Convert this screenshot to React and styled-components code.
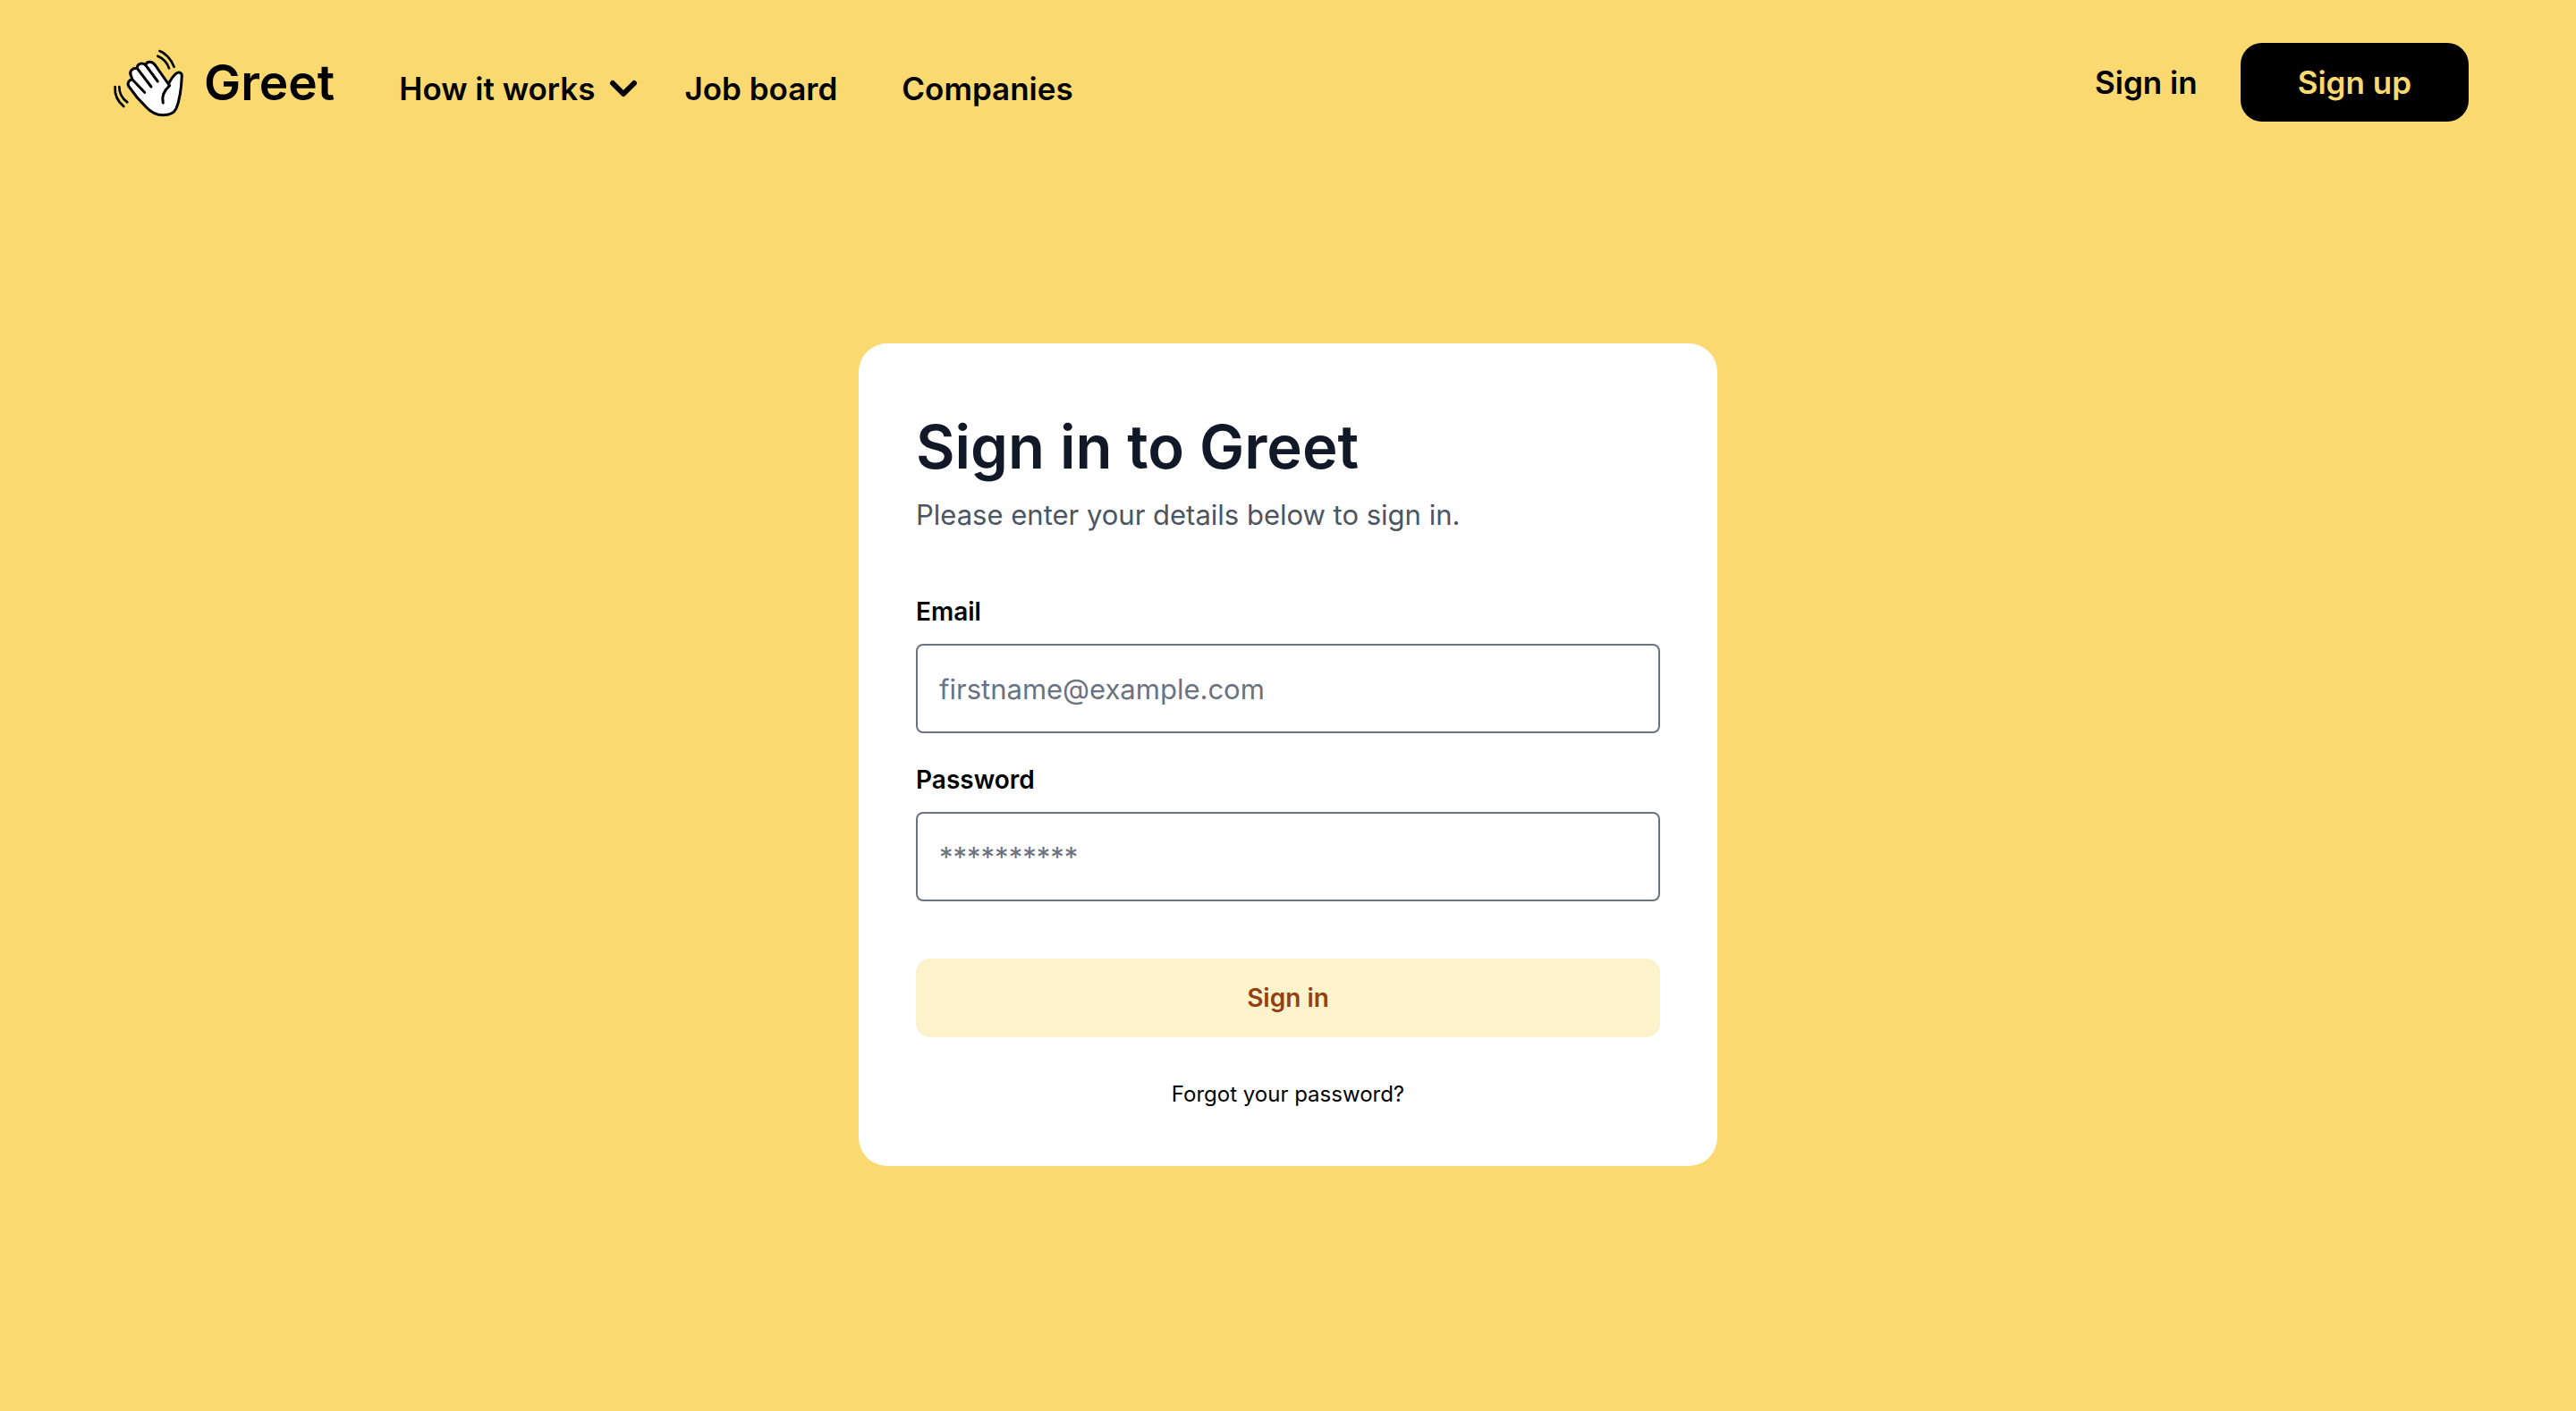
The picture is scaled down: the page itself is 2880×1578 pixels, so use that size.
import React from "react";
import styled, { createGlobalStyle } from "styled-components";

const yellow = "#fad970";

const GlobalStyle = createGlobalStyle`
  *, *::before, *::after { box-sizing: border-box; }
  body {
    margin: 0;
    background: ${yellow};
    color: #000;
    font-family: Inter, "Liberation Sans", sans-serif;
    -webkit-font-smoothing: antialiased;
  }
  button, input { font: inherit; }
`;

const Page = styled.div`
  min-height: 100vh;
  background: ${yellow};
`;

const Header = styled.header`
  display: flex;
  align-items: center;
  padding: 48px 120px;
`;

const Logo = styled.a`
  display: flex;
  align-items: center;
  gap: 16px;
  color: inherit;
  font-size: 55px;
  font-weight: 600;
  line-height: 88px;
  text-decoration: none;
`;

const Hand = styled.svg`
  width: 92px;
  height: 88px;
`;

const Nav = styled.nav`
  display: flex;
  align-items: center;
  gap: 72px;
  margin-left: 72px;
  padding-top: 14px;
`;

const navText = `
  font-size: 35px;
  font-weight: 600;
  line-height: 48px;
`;

const NavLink = styled.a`
  ${navText}
  color: inherit;
  text-decoration: none;
`;

const NavMenu = styled.button`
  ${navText}
  display: flex;
  align-items: center;
  gap: 16px;
  margin-right: -20px;
  padding: 0;
  border: 0;
  background: none;
  color: inherit;
`;

const Chevron = styled.svg`
  width: 32px;
  height: 20px;
`;

const Actions = styled.div`
  display: flex;
  align-items: center;
  gap: 48px;
  margin-left: auto;
`;

const SignUp = styled.a`
  ${navText}
  padding: 20px 64px;
  border-radius: 24px;
  background: #000;
  color: ${yellow};
  text-decoration: none;
`;

const Main = styled.main`
  display: flex;
  justify-content: center;
  padding: 200px 48px 48px;
`;

const Card = styled.section`
  width: 100%;
  max-width: 960px;
  padding: 72px 64px 64px;
  border-radius: 32px;
  background: #fff;
`;

const Title = styled.h1`
  margin: 0 0 8px;
  color: #111827;
  font-size: 67px;
  font-weight: 600;
  line-height: 88px;
`;

const Subtitle = styled.p`
  margin: 0;
  color: #4b5563;
  font-size: 31px;
  line-height: 48px;
`;

const Form = styled.form`
  display: flex;
  flex-direction: column;
  gap: 32px;
  margin-top: 64px;
`;

const Field = styled.div`
  display: flex;
  flex-direction: column;
  gap: 16px;
`;

const Label = styled.label`
  font-size: 28px;
  font-weight: 600;
  line-height: 40px;
`;

const Input = styled.input`
  width: 100%;
  height: 100px;
  padding: 0 24px;
  border: 2px solid #6b7280;
  border-radius: 8px;
  background: #fff;
  font-size: 31px;
  &::placeholder { color: #6b7280; opacity: 1; }
`;

const Submit = styled.button`
  margin-top: 32px;
  padding: 24px;
  border: 0;
  border-radius: 16px;
  background: #fcf2cc;
  color: #92400e;
  font-size: 28px;
  font-weight: 600;
  line-height: 40px;
`;

const Forgot = styled.a`
  align-self: center;
  margin-top: 16px;
  color: #000;
  font-size: 24px;
  line-height: 32px;
  text-decoration: none;
`;

function WavingHand() {
  return (
    <Hand viewBox="0 -6 276 264" fill="none" stroke="#000" strokeWidth="9" strokeLinecap="round" strokeLinejoin="round" aria-hidden="true">
      <path
        fill="#fff"
        d="M205 132 L160 68 C150 54 133 54 128 68 C117 58 99 64 100 79 C86 77 72 88 79 103 L84 117 C74 116 65 128 72 140 C88 164 108 188 130 209 C148 228 166 236 186 236 C207 236 224 229 231 214 C242 188 248 154 250 104 C250 92 238 91 230 97 C219 106 212 118 205 132 Z"
      />
      <path d="M84 117 L125 160 M100 79 L147 141 M128 68 L169 123 M205 132 L209 137 C190 155 181 173 187 195" />
      <path d="M175 21 C194 27 214 49 224 74 M169 38 C186 45 201 61 207 79" strokeWidth="8" />
      <path d="M26 141 C24 165 33 189 55 207 M40 141 C40 162 49 180 67 193" strokeWidth="8" />
    </Hand>
  );
}

export default function App() {
  return (
    <>
      <GlobalStyle />
      <Page>
        <Header>
          <Logo href="#">
            <WavingHand />
            Greet
          </Logo>
          <Nav>
            <NavMenu type="button">
              How it works
              <Chevron viewBox="0 0 32 20" fill="none" stroke="#000" strokeWidth="6" strokeLinecap="round" strokeLinejoin="round" aria-hidden="true">
                <path d="M4 4 L16 16 L28 4" />
              </Chevron>
            </NavMenu>
            <NavLink href="#">Job board</NavLink>
            <NavLink href="#">Companies</NavLink>
          </Nav>
          <Actions>
            <NavLink href="#">Sign in</NavLink>
            <SignUp href="#">Sign up</SignUp>
          </Actions>
        </Header>
        <Main>
          <Card>
            <Title>Sign in to Greet</Title>
            <Subtitle>Please enter your details below to sign in.</Subtitle>
            <Form onSubmit={(event) => event.preventDefault()}>
              <Field>
                <Label htmlFor="email">Email</Label>
                <Input id="email" type="email" placeholder="firstname@example.com" />
              </Field>
              <Field>
                <Label htmlFor="password">Password</Label>
                <Input id="password" type="password" placeholder="**********" />
              </Field>
              <Submit type="submit">Sign in</Submit>
              <Forgot href="#">Forgot your password?</Forgot>
            </Form>
          </Card>
        </Main>
      </Page>
    </>
  );
}
